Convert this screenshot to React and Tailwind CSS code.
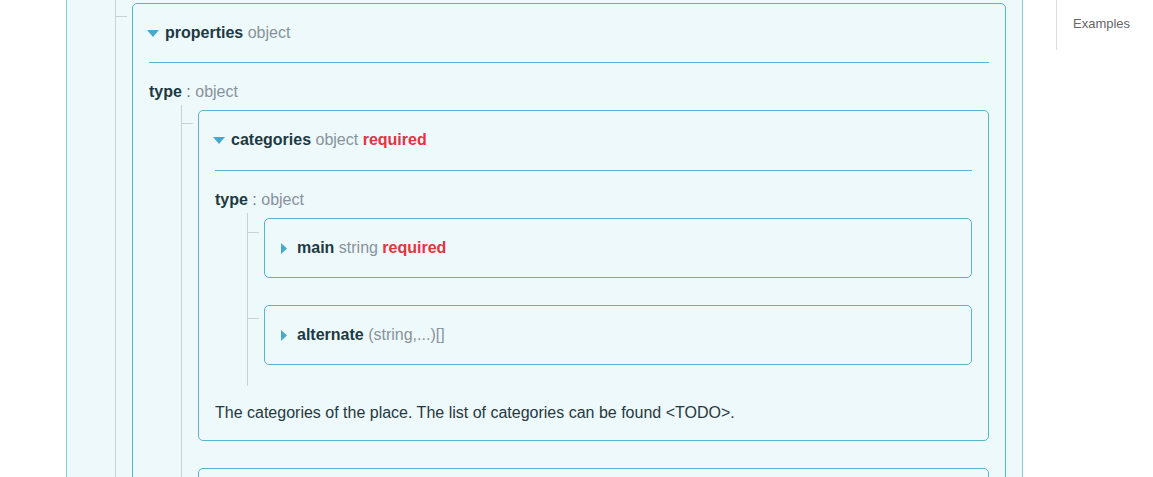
import React from 'react';

const font = { fontFamily: '"Liberation Sans", Arial, sans-serif' };

const Caret = ({ open }) =>
  open ? (
    <svg width="12" height="7" viewBox="0 0 12 7" className="shrink-0">
      <path d="M0 0 L12 0 L6 7 Z" fill="#4aa9cb" />
    </svg>
  ) : (
    <svg width="6" height="11" viewBox="0 0 6 11" className="shrink-0">
      <path d="M0 0 L6 5.5 L0 11 Z" fill="#4aa9cb" />
    </svg>
  );

const Title = ({ name, type, required, open }) => (
  <div className={`flex items-center h-6 ${open ? 'gap-[6px] -ml-[2px]' : 'gap-[10px]'}`}>
    <Caret open={open} />
    <div className="text-base leading-6 whitespace-nowrap">
      <span className="font-bold text-[#1d3942]">{name}</span>{' '}
      <span className="text-[#87939a]">{type}</span>
      {required && <span className="font-bold text-[#e8323f]"> required</span>}
    </div>
  </div>
);

const TypeLine = () => (
  <div className="text-base leading-6 mt-[17px]">
    <span className="font-bold text-[#1d3942]">type</span>
    <span className="text-[#6b777d]"> : </span>
    <span className="text-[#87939a]">object</span>
  </div>
);

// one branch of the tree: connector tick, then the box
const Branch = ({ children, tick = 'mt-[13px]' }) => (
  <div className="flex items-start">
    <div className={`w-[11px] h-px bg-[#c9d1d5] shrink-0 ${tick}`} />
    <div className="flex-1 ml-[5px] min-w-0">{children}</div>
  </div>
);

const Tree = ({ children, className = '' }) => (
  <div className={`ml-8 border-l border-[#c9d1d5] ${className}`}>{children}</div>
);

const Collapsed = ({ name, type, required }) => (
  <div className="border border-[#5ab4cc] rounded-[5px] bg-[#eef9fc] h-[60px] px-4 flex items-center">
    <Title name={name} type={type} required={required} />
  </div>
);

export default function App() {
  return (
    <div className="flex bg-white h-[477px] overflow-hidden" style={font}>
      <div className="w-[66px] shrink-0" />
      <div className="w-[957px] shrink-0 border-x border-[#80cde2] bg-[#eef9fc]">
        <div className="ml-[48px] mr-4 border-l border-[#c9d1d5] pt-[3px]">
          <Branch>
            <div className="border border-[#5ab4cc] rounded-[5px] bg-[#eef9fc] px-4 pt-[17px]">
              <Title name="properties" type="object" open />
              <div className="h-px bg-[#5ab4cc] mt-[17px]" />
              <TypeLine />
              <Tree className="pt-[5px] mt-px">
                <Branch>
                  <div className="border border-[#5ab4cc] rounded-[5px] bg-[#eef9fc] px-4 pt-[17px] pb-[15px]">
                    <Title name="categories" type="object" required open />
                    <div className="h-px bg-[#5ab4cc] mt-[18px]" />
                    <TypeLine />
                    <Tree className="pt-[5px] mt-px pb-[21px]">
                      <div className="flex flex-col gap-[27px]">
                        <Branch tick="mt-[14px]">
                          <Collapsed name="main" type="string" required />
                        </Branch>
                        <Branch>
                          <Collapsed name="alternate" type="(string,...)[]" />
                        </Branch>
                      </div>
                    </Tree>
                    <p className="text-base leading-6 text-[#26383f] mt-[15px]">
                      The categories of the place. The list of categories can be found &lt;TODO&gt;.
                    </p>
                  </div>
                </Branch>
                <div className="mt-[27px]">
                  <Branch>
                    <div className="border border-[#5ab4cc] rounded-[5px] bg-[#eef9fc] h-[60px]" />
                  </Branch>
                </div>
              </Tree>
            </div>
          </Branch>
        </div>
      </div>
      <div className="ml-[33px] self-start h-[50px] border-l border-[#dcdcdc] pl-4 pt-[15px]">
        <div className="text-[13px] leading-[18px] text-[#666]">Examples</div>
      </div>
    </div>
  );
}
